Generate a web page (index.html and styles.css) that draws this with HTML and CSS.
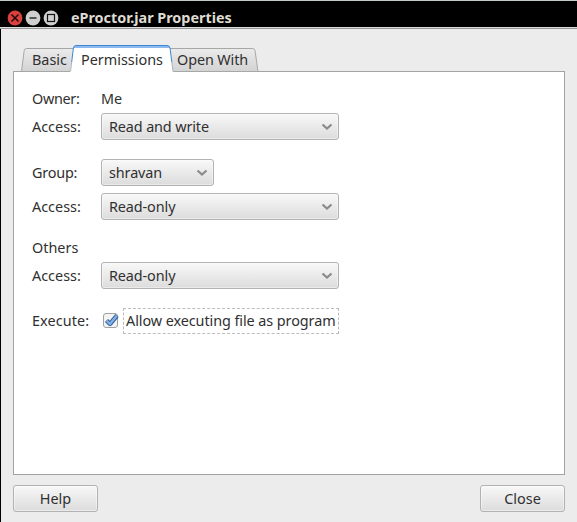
FILE: index.html
```html
<!DOCTYPE html>
<html lang="en">
<head>
<meta charset="utf-8">
<title>eProctor.jar Properties</title>
<link rel="stylesheet" href="styles.css">
</head>
<body>
<div class="window">
  <header class="titlebar">
    <svg class="controls" width="54" height="18" viewBox="0 0 54 18">
      <circle cx="9" cy="9" r="7.4" fill="#d9403e"/>
      <path d="M5.5 5.5l7 7M12.5 5.5l-7 7" stroke="#210808" stroke-width="1.5"/>
      <circle cx="27" cy="9" r="7.4" fill="#cfcfcf"/>
      <path d="M23.5 9h7" stroke="#555" stroke-width="2"/>
      <circle cx="45" cy="9" r="7.4" fill="#cfcfcf"/>
      <rect x="41.5" y="5.5" width="7" height="7" fill="none" stroke="#111" stroke-width="1.2"/>
    </svg>
    <h1 class="title">eProctor.jar Properties</h1>
  </header>
  <main class="content">
    <nav class="tabs">
      <svg class="tab-shapes" width="250" height="28" viewBox="0 0 250 28">
        <defs>
          <linearGradient id="idle" x1="0" y1="0" x2="0" y2="1"><stop offset="0" stop-color="#ebebeb"/><stop offset="1" stop-color="#d3d3d3"/></linearGradient>
        </defs>
        <path d="M8.5 27.5L11.2 6.5Q11.7 4.5 13.5 4.5H64V27.5Z" fill="url(#idle)" stroke="#a5a8a5"/>
        <path d="M155 27.5V4.5H239.500Q241.500 4.500 242 6.500L245 27.500Z" fill="url(#idle)" stroke="#a5a8a5"/>
        <path d="M57 28L60.200 4Q60.500 1.500 63 1.500H154Q156.500 1.500 157 4L160.200 28" fill="#fff"/>
        <path d="M61 3H156.500" stroke="#8cbaf0" stroke-width="2"/>
        <path d="M57.500 27.500L58.700 18M158.800 18L160 27.500" fill="none" stroke="#a9b4bf"/>
        <path d="M58.700 18L60.400 4Q60.700 1.500 63 1.500H154Q156.500 1.500 157 4L158.800 18" fill="none" stroke="#3e86d0"/>
      </svg>
      <span class="tab basic">Basic</span>
      <span class="tab permissions">Permissions</span>
      <span class="tab open-with">Open With</span>
    </nav>
    <section class="panel">
      <div class="row text-row"><span class="label owner">Owner:</span><span class="me">Me</span></div>
      <div class="row"><span class="label access">Access:</span><div class="combo"><span class="read-write">Read and write</span><svg class="chevron" width="12" height="8" viewBox="0 0 12 8"><path d="M1.500 1.500L6 5.500L10.500 1.500"/></svg></div></div>
      <div class="row group-row"><span class="label group">Group:</span><div class="combo small"><span class="shravan">shravan</span><svg class="chevron" width="12" height="8" viewBox="0 0 12 8"><path d="M1.500 1.500L6 5.500L10.500 1.500"/></svg></div></div>
      <div class="row"><span class="label access">Access:</span><div class="combo"><span class="read-only">Read-only</span><svg class="chevron" width="12" height="8" viewBox="0 0 12 8"><path d="M1.500 1.500L6 5.500L10.500 1.500"/></svg></div></div>
      <div class="row text-row others-row"><span class="label others">Others</span></div>
      <div class="row"><span class="label access">Access:</span><div class="combo"><span class="read-only">Read-only</span><svg class="chevron" width="12" height="8" viewBox="0 0 12 8"><path d="M1.500 1.500L6 5.500L10.500 1.500"/></svg></div></div>
      <div class="row execute-row"><span class="label execute">Execute:</span>
        <svg class="check" width="22" height="20" viewBox="0 0 22 20">
          <rect x="2.500" y="2.500" width="14" height="14" rx="2.500" fill="#f3f3f3" stroke="#a0a0a0"/>
          <path d="M5.500 9.500L9 13L16 4.500" fill="none" stroke="#31609d" stroke-width="4.400" stroke-linejoin="round"/>
          <path d="M5.800 9.800L9 13L15.700 4.800" fill="none" stroke="#85b0e6" stroke-width="2.400"/>
        </svg>
        <div class="focus"><span class="allow">Allow executing file as program</span></div>
      </div>
    </section>
    <footer class="actions"><button class="button"><span class="help">Help</span></button><button class="button"><span class="close">Close</span></button></footer>
  </main>
</div>
</body>
</html>
```
FILE: styles.css
```css
* { box-sizing: border-box; }
body { margin: 0; background: #ececec; color: #303030; font: 14.4px/20px "Noto Sans", sans-serif; overflow: hidden; }
span { white-space: nowrap; }
.window { height: 522px; display: flex; flex-direction: column; }
.titlebar { height: 29px; flex: none; display: flex; align-items: center; padding: 7px 0 0 6px; background: #000; border-top: 1px solid #c3cbc8; border-bottom: 1px solid #969696; box-shadow: inset 0 -1px #dcdcdc; }
.controls { flex: none; margin-right: 11px; }
.title { margin: 0; color: #dfdbd2; font-size: 14.4px; line-height: 18px; font-weight: 700; white-space: nowrap; letter-spacing: -.02px; }
.content { flex: 1; border-left: 1px solid #000; padding: 15px 12px 0; display: flex; flex-direction: column; }
.tabs { height: 28px; margin-bottom: -1px; display: flex; position: relative; z-index: 1; padding: 6px 0 0 19px; }
.tab-shapes { position: absolute; left: 0; top: 0; }
.tab { position: relative; }
.basic { width: 49px; }
.permissions { width: 96px; }
.open-with { letter-spacing: -.1px; }
.panel { height: 404px; flex: none; background: #fff; border: 1px solid #a3a3a3; padding: 17px 18px; }
.row { height: 27px; display: flex; align-items: center; }
.text-row { height: 20px; margin-bottom: 4px; }
.group-row { margin: 19px 0 7px; }
.others-row { margin-top: 18px; }
.label { width: 69px; flex: none; }
.owner { letter-spacing: -.3px; }
.group { letter-spacing: -.2px; }
.read-write { letter-spacing: -.12px; }
.read-only { letter-spacing: -.1px; }
.shravan { letter-spacing: -.1px; }
.execute { letter-spacing: .1px; }
.allow { letter-spacing: -.07px; }
.combo { width: 238px; height: 27px; display: flex; align-items: center; justify-content: space-between; padding: 0 5px 0 7px; border: 1px solid #b2b2b2; border-radius: 3px; background: linear-gradient(#f8f8f8, #dcdcdc); box-shadow: inset 0 0 0 1px rgba(255,255,255,.4); }
.small { width: 113px; }
.chevron { fill: none; stroke: #8a8a8a; stroke-width: 2.2; }
.execute-row { height: 26px; margin-top: 19px; }
.check { flex: none; }
.focus { width: 216px; height: 26px; padding: 2px; border: 1px dashed #bcbcbc; }
.actions { margin-top: 10px; display: flex; justify-content: space-between; }
.button { width: 85px; height: 27px; padding: 0; font: inherit; color: inherit; border: 1px solid #b2b2b2; border-radius: 3px; background: linear-gradient(#f8f8f8, #dcdcdc); box-shadow: inset 0 0 0 1px rgba(255,255,255,.4); }
```
